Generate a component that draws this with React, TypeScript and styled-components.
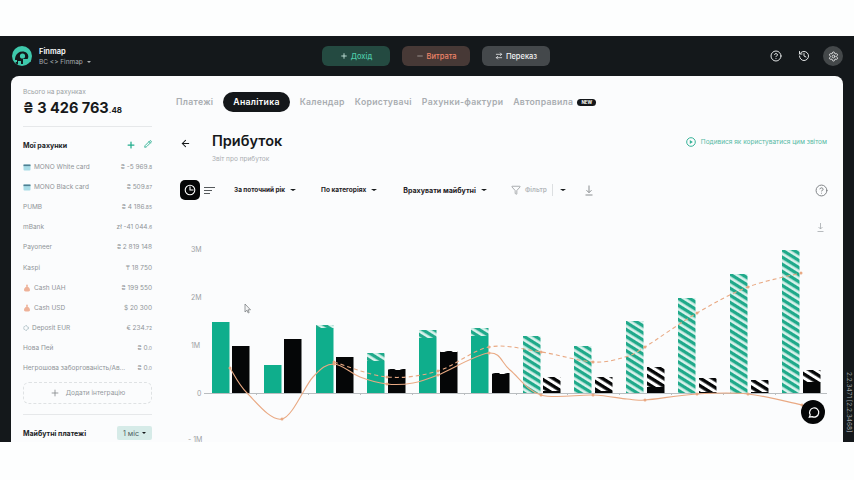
import React from "react";
import styled, { createGlobalStyle } from "styled-components";
import { ArrowLeft, ArrowRightLeft, CircleHelp, Filter, History, Minus, Pencil, Plus, Settings } from "lucide-react";

const GlobalStyle = createGlobalStyle`
  html, body { margin: 0; padding: 0; background: #fdfefe; }
  body { font-family: Inter, "Noto Sans", sans-serif; }
  * { box-sizing: border-box; }
`;

const Page = styled.div`
  width: 854px;
  height: 480px;
  display: flex;
  flex-direction: column;
  overflow: hidden;
  padding: 36px 0 38px;
`;

const Shell = styled.div`
  flex: 1;
  min-height: 0;
  display: flex;
  flex-direction: column;
  background: #14181b;
`;

const Header = styled.header`
  height: 40px;
  flex: none;
  display: grid;
  grid-template-columns: 322px 228px 1fr;
  align-items: center;
`;

const Brand = styled.div`
  display: flex;
  align-items: center;
  gap: 3px;
  padding-left: 11px;
`;

const BrandText = styled.div`
  display: flex;
  flex-direction: column;
  gap: 2px;
  color: #fff;
  padding: 1px 0 0 3px;
`;

const BrandName = styled.div`
  font-size: 7.5px;
  line-height: 9px;
  font-weight: 600;
`;

const BrandOrg = styled.div`
  font-size: 6.5px;
  line-height: 8px;
  color: #a8adb0;
  display: flex;
  align-items: center;
  gap: 4px;
`;

const MiniCaret = styled.span<{ $color?: string; $size?: number }>`
  display: inline-block;
  width: 0;
  height: 0;
  flex: none;
  border-left: ${(p) => p.$size ?? 3}px solid transparent;
  border-right: ${(p) => p.$size ?? 3}px solid transparent;
  border-top: ${(p) => (p.$size ?? 3) - 0.5}px solid ${(p) => p.$color ?? "#15181a"};
`;

const Actions = styled.div`
  display: flex;
  gap: 12px;
`;

const ActionButton = styled.button<{ $bg: string; $fg: string }>`
  width: 68px;
  height: 20px;
  border: 0;
  padding: 0;
  border-radius: 6px;
  background: ${(p) => p.$bg};
  color: ${(p) => p.$fg};
  font: 500 7.5px Inter, sans-serif;
  display: flex;
  align-items: center;
  justify-content: center;
  gap: 3px;
`;

const HeaderTools = styled.div`
  display: flex;
  align-items: center;
  justify-content: flex-end;
  gap: 16px;
  padding-right: 11px;
  color: #e2e4e5;
`;

const ToolCircle = styled.span<{ $active?: boolean }>`
  width: 20px;
  height: 20px;
  border-radius: 50%;
  display: flex;
  align-items: center;
  justify-content: center;
  background: ${(p) => (p.$active ? "#44484a" : "transparent")};
  margin-left: ${(p) => (p.$active ? "-3px" : "0")};
`;

const Body = styled.div`
  flex: 1;
  min-height: 0;
  display: flex;
  padding-left: 11px;
`;

const Gutter = styled.div`
  width: 11px;
  flex: none;
  display: flex;
  align-items: flex-end;
  justify-content: center;
  padding-bottom: 10px;
`;

const Version = styled.span`
  writing-mode: vertical-rl;
  font-size: 6.5px;
  line-height: 8px;
  color: #9da1a4;
  white-space: nowrap;
`;

const Panel = styled.div`
  flex: 1;
  min-width: 0;
  display: flex;
  background: #fbfcfd;
  border-radius: 8px 8px 0 0;
  overflow: hidden;
`;

const Sidebar = styled.aside`
  width: 154px;
  flex: none;
  padding: 12px 13px 0 12px;
  overflow: hidden;
`;

const TotalLabel = styled.div`
  font-size: 6.5px;
  line-height: 8px;
  color: #9a9fa3;
`;

const TotalValue = styled.div`
  margin-top: 3px;
  font-size: 14.5px;
  line-height: 18px;
  font-weight: 700;
  color: #17191b;
  white-space: nowrap;
`;

const Cents = styled.span<{ $size?: number }>`
  font-size: ${(p) => p.$size ?? 5}px;
  font-weight: inherit;
`;

const Divider = styled.div<{ $top: number }>`
  height: 1px;
  background: #e6e8ea;
  margin-top: ${(p) => p.$top}px;
`;

const SectionRow = styled.div<{ $top: number }>`
  display: flex;
  align-items: center;
  justify-content: space-between;
  height: 14px;
  margin-top: ${(p) => p.$top}px;
`;

const SectionTitle = styled.div`
  font-size: 7px;
  font-weight: 700;
  color: #202326;
  white-space: nowrap;
`;

const SectionIcons = styled.div`
  display: flex;
  gap: 8px;
  color: #23ad8e;
`;

const AccountList = styled.div`
  margin-top: 5px;
  display: flex;
  flex-direction: column;
`;

const AccountRow = styled.div`
  height: 20.1px;
  display: flex;
  align-items: center;
  justify-content: space-between;
  font-size: 6.5px;
  color: #8f9498;
  white-space: nowrap;
`;

const AccountName = styled.div`
  display: flex;
  align-items: center;
  gap: 3px;
  min-width: 0;
`;

const AddIntegration = styled.div`
  height: 22px;
  margin-top: 4px;
  border: 1px dashed #dfe2e4;
  border-radius: 6px;
  display: flex;
  align-items: center;
  justify-content: center;
  gap: 6px;
  font-size: 6.5px;
  color: #93989c;
`;

const Period = styled.div`
  width: 35px;
  height: 14px;
  background: #d6ebe8;
  border-radius: 2px;
  display: flex;
  align-items: center;
  justify-content: center;
  gap: 3px;
  font-size: 7px;
  color: #4a5a5a;
`;

const Main = styled.main`
  flex: 1;
  min-width: 0;
  position: relative;
  display: flex;
  flex-direction: column;
`;

const Tabs = styled.nav`
  display: flex;
  align-items: center;
  height: 20px;
  margin-top: 16px;
  padding-left: 11px;
  gap: 10px;
`;

const Tab = styled.span<{ $active?: boolean }>`
  font-size: 8.7px;
  line-height: 20px;
  font-weight: 600;
  letter-spacing: 0.29px;
  white-space: nowrap;
  color: ${(p) => (p.$active ? "#fff" : "#a9adb1")};
  background: ${(p) => (p.$active ? "#14171a" : "transparent")};
  border-radius: 10px;
  padding: ${(p) => (p.$active ? "0 10px" : "0")};
`;

const NewBadge = styled.span`
  margin-left: -6px;
  width: 19px;
  height: 7px;
  border-radius: 4px;
  background: #14171a;
  color: #fff;
  font-size: 4.5px;
  line-height: 7px;
  font-weight: 700;
  text-align: center;
`;

const TitleRow = styled.div`
  height: 32px;
  margin-top: 17px;
  display: flex;
  align-items: flex-start;
  padding: 4px 16px 0 15px;
  color: #15181a;
`;

const BackSlot = styled.div`
  width: 32px;
  flex: none;
`;

const TitleBlock = styled.div`
  flex: 1;
`;

const Title = styled.h1`
  margin: 0;
  font-size: 14.5px;
  line-height: 16px;
  font-weight: 600;
`;

const Subtitle = styled.div`
  margin-top: 6px;
  font-size: 6.5px;
  line-height: 8px;
  color: #a9adb1;
`;

const GuideLink = styled.div`
  display: flex;
  align-items: center;
  gap: 5px;
  font-size: 6.5px;
  line-height: 10px;
  color: #55b9a3;
  white-space: nowrap;
  padding-top: 4px;
`;

const Toolbar = styled.div`
  height: 20px;
  margin-top: 19px;
  display: flex;
  align-items: center;
  padding: 0 15px;
`;

const ChartToggle = styled.span`
  width: 20px;
  height: 20px;
  flex: none;
  border-radius: 5px;
  background: #050607;
  display: flex;
  align-items: center;
  justify-content: center;
`;

const ListToggle = styled.span`
  margin-left: 4px;
  width: 12px;
  display: flex;
  flex-direction: column;
  gap: 2px;
`;

const ListLine = styled.i<{ $w: number }>`
  display: block;
  height: 1px;
  width: ${(p) => p.$w}px;
  background: #55595c;
`;

const Dropdown = styled.span<{ $left: number; $size: number }>`
  margin-left: ${(p) => p.$left}px;
  display: flex;
  align-items: center;
  gap: 5px;
  font-size: ${(p) => p.$size}px;
  font-weight: 700;
  color: #1d2023;
  white-space: nowrap;
`;

const FilterText = styled.span`
  margin-left: 4px;
  font-size: 6.5px;
  font-weight: 600;
  color: #b4b8bb;
`;

const ToolDivider = styled.span`
  width: 1px;
  height: 12px;
  margin: 0 7px 0 5px;
  background: #dcdfe1;
`;

const ToolbarEnd = styled.span`
  margin-left: auto;
  display: flex;
  color: #7d8184;
`;

const ChartWrap = styled.div`
  flex: 1;
  min-height: 0;
  margin-top: 10px;
`;

const ChatBubble = styled.span`
  position: absolute;
  right: 18px;
  bottom: 18px;
  width: 24px;
  height: 24px;
  border-radius: 50%;
  background: #050607;
  display: flex;
  align-items: center;
  justify-content: center;
`;

const accounts = [
  { name: "MONO White card", icon: "card", value: "₴ -5 969", cents: ".8" },
  { name: "MONO Black card", icon: "card", value: "₴ 509", cents: ".87" },
  { name: "PUMB", value: "₴ 4 186", cents: ".85" },
  { name: "mBank", value: "zł -41 044", cents: ".6" },
  { name: "Payoneer", value: "₴ 2 819 148" },
  { name: "Kaspi", value: "₸ 18 750" },
  { name: "Cash UAH", icon: "cash", value: "₴ 199 550" },
  { name: "Cash USD", icon: "cash", value: "$  20 300" },
  { name: "Deposit EUR", icon: "deposit", value: "€ 234", cents: ".72" },
  { name: "Нова Пей", value: "₴ 0", cents: ".0" },
  { name: "Негрошова заборгованість/Ав...", value: "₴ 0", cents: ".0" },
];

const AccountIcon = ({ kind }: { kind?: string }) => {
  if (kind === "card")
    return (
      <svg width="8" height="8" viewBox="0 0 8 8">
        <rect x="0.5" y="1.5" width="7" height="6" rx="1" fill="#a8dbe6" />
        <rect x="0.5" y="1.5" width="7" height="1.6" fill="#4f7f92" />
      </svg>
    );
  if (kind === "cash")
    return (
      <svg width="8" height="8" viewBox="0 0 8 8">
        <path d="M3 .8h2L4.6 2.6C6 3.4 7 4.8 7 6c0 1.2-1 1.6-3 1.6S1 7.200 1 6c0-1.200 1-2.600 2.400-3.400z" fill="#eeb299" />
      </svg>
    );
  if (kind === "deposit")
    return (
      <svg width="6" height="8" viewBox="0 0 8 8" fill="none">
        <circle cx="4" cy="4" r="3" stroke="#7d9aa3" strokeWidth="1" strokeDasharray="2 1" />
      </svg>
    );
  return null;
};

// bars in page pixels: [left, top of solid part, top of hatched part]
const greens = [
  [212, 322, 322], [264, 365, 365], [316, 328, 325], [367, 361, 353], [419, 338, 330], [471, 336, 328],
  [523, 394, 336], [574, 394, 346], [626, 394, 321], [678, 394, 298], [730, 394, 274], [782, 394, 250],
];
const blacks = [
  [232, 346, 346], [284, 339, 339], [336, 357, 357], [388, 370, 369], [440, 352, 351], [492, 374, 373],
  [543, 391, 377], [595, 391, 377], [647, 387, 367], [699, 392, 378], [751, 392, 380], [803, 382, 370],
];
const solidLine: [number, number][] = [
  [230, 368], [247, 393], [282, 419], [313, 377], [334, 364], [360, 377], [387, 384], [413, 383], [438, 375],
  [489, 353], [510, 370], [541, 395], [593, 395], [627, 399], [645, 400], [697, 394], [748, 394], [802, 405],
];
const dashedLine: [number, number][] = [
  [334, 362], [387, 377], [438, 371], [489, 347], [541, 352], [593, 362], [625, 357], [645, 347], [697, 313],
  [748, 287], [801, 273],
];
const solidDots = [0, 2, 4, 6, 8, 9, 11, 12, 14, 15, 16, 17];
const dashedDots = [0, 1, 2, 3, 4, 5, 7, 8, 9, 10];
const ticks = [256, 308, 360, 412, 464, 516, 567, 619, 671, 723, 775];

const smooth = (pts: [number, number][]) => {
  let d = `M${pts[0][0]} ${pts[0][1]}`;
  for (let i = 0; i < pts.length - 1; i++) {
    const p0 = pts[Math.max(i - 1, 0)];
    const p1 = pts[i];
    const p2 = pts[i + 1];
    const p3 = pts[Math.min(i + 2, pts.length - 1)];
    d += ` C${p1[0] + (p2[0] - p0[0]) / 6} ${p1[1] + (p2[1] - p0[1]) / 6} ${p2[0] - (p3[0] - p1[0]) / 6} ${p2[1] - (p3[1] - p1[1]) / 6} ${p2[0]} ${p2[1]}`;
  }
  return d;
};

const Chart = () => (
  <svg width="678" height="232" viewBox="165 210 678 232" style={{ display: "block" }}>
    <defs>
      <pattern id="hatchGreen" width="6" height="6" patternUnits="userSpaceOnUse" patternTransform="rotate(32)">
        <rect width="6" height="6" fill="#d9f2ec" />
        <rect width="6" height="3.3" fill="#1fa98a" />
      </pattern>
      <pattern id="hatchBlack" width="6.500" height="6.500" patternUnits="userSpaceOnUse" patternTransform="rotate(32)">
        <rect width="6.500" height="6.500" fill="#fff" />
        <rect width="6.500" height="3.400" fill="#050607" />
      </pattern>
    </defs>
    <g fontFamily="Inter, sans-serif" fontSize="7" fill="#9da1a4">
      <text x="191" y="252">3M</text>
      <text x="191" y="300">2M</text>
      <text x="191" y="348">1M</text>
      <text x="197" y="396">0</text>
      <text x="188" y="441.500">- 1M</text>
    </g>
    <rect x="204" y="393" width="623" height="1" fill="#b9bdc0" />
    {ticks.map((x) => (
      <rect key={x} x={x} y="393" width="1" height="2" fill="#b9bdc0" />
    ))}
    {greens.map(([x, solid, top]) => (
      <g key={x}>
        {solid > top && <rect x={x} y={top} width="17.500" height={Math.min(solid, 393) - top} fill="url(#hatchGreen)" />}
        {solid < 393 && <rect x={x} y={solid} width="17.500" height={393 - solid} fill="#0fae8c" />}
      </g>
    ))}
    {blacks.map(([x, solid, top]) => (
      <g key={x}>
        {solid > top && <rect x={x} y={top} width="17.500" height={solid - top} fill="url(#hatchBlack)" />}
        <rect x={x} y={solid} width="17.500" height={393 - solid} fill="#050607" />
      </g>
    ))}
    <path d={smooth(solidLine)} fill="none" stroke="#e9a983" strokeWidth="1.100" />
    <path d={smooth(dashedLine)} fill="none" stroke="#e9a983" strokeWidth="1.100" strokeDasharray="4 3" />
    {solidDots.map((i) => (
      <circle key={i} cx={solidLine[i][0]} cy={solidLine[i][1]} r="1.5" fill="#e9a983" />
    ))}
    {dashedDots.map((i) => (
      <circle key={i} cx={dashedLine[i][0]} cy={dashedLine[i][1]} r="1.5" fill="#e9a983" />
    ))}
    <path d="M245 304v8l2-1.800 1.200 2.800 1-.5-1.200-2.700h2.500z" fill="#f4f5f6" stroke="#6f7376" strokeWidth=".7" />
    <path d="M820.500 223v6m-2-2 2 2 2-2M817.500 231.500h6" fill="none" stroke="#a6aaad" strokeWidth=".8" />
  </svg>
);

const Logo = () => (
  <svg width="22" height="22" viewBox="0 0 22 22">
    <circle cx="11" cy="11" r="10" fill="#3fc9ac" />
    <path d="M5.500 19c-1.500-2-2-5-1-7.500C5.500 8.500 8 6.500 11.500 6.500s5.800 2.200 5.800 5c0 1-.3 1.900-.8 2.500h-4.500v5h-2v-3h-3v3.500z" fill="#14181b" />
    <circle cx="11.500" cy="11" r="2.600" fill="#3fc9ac" />
    <rect x="13" y="14.800" width="7" height="2.200" rx="1.100" fill="#3fc9ac" />
    <rect x="3" y="15" width="3" height="2" fill="#3fc9ac" />
  </svg>
);

export default function App() {
  return (
    <Page>
      <GlobalStyle />
      <Shell>
        <Header>
          <Brand>
            <Logo />
            <BrandText>
              <BrandName>Finmap</BrandName>
              <BrandOrg>
                BC &lt;&gt; Finmap <MiniCaret $color="#a8adb0" $size={2.5} />
              </BrandOrg>
            </BrandText>
          </Brand>
          <Actions>
            <ActionButton $bg="#244a41" $fg="#4ecba9">
              <Plus size={8} color="#cfeee6" strokeWidth={2.5} /> Дохід
            </ActionButton>
            <ActionButton $bg="#473936" $fg="#ee8468">
              <Minus size={8} color="#a8a09c" strokeWidth={2.5} /> Витрата
            </ActionButton>
            <ActionButton $bg="#44484b" $fg="#f0f1f2">
              <ArrowRightLeft size={8} strokeWidth={2.2} /> Переказ
            </ActionButton>
          </Actions>
          <HeaderTools>
            <CircleHelp size={12} strokeWidth={2} />
            <History size={12} strokeWidth={2} />
            <ToolCircle $active>
              <Settings size={11} strokeWidth={2} />
            </ToolCircle>
          </HeaderTools>
        </Header>
        <Body>
          <Panel>
            <Sidebar>
              <TotalLabel>Всього на рахунках</TotalLabel>
              <TotalValue>
                ₴ 3 426 763<Cents $size={8}>.48</Cents>
              </TotalValue>
              <Divider $top={7} />
              <SectionRow $top={11}>
                <SectionTitle>Мої рахунки</SectionTitle>
                <SectionIcons>
                  <Plus size={10} strokeWidth={3} />
                  <Pencil size={8} strokeWidth={2.6} />
                </SectionIcons>
              </SectionRow>
              <AccountList>
                {accounts.map((a) => (
                  <AccountRow key={a.name}>
                    <AccountName>
                      <AccountIcon kind={a.icon} />
                      <span>{a.name}</span>
                    </AccountName>
                    <span>
                      {a.value}
                      {a.cents && <Cents>{a.cents}</Cents>}
                    </span>
                  </AccountRow>
                ))}
              </AccountList>
              <AddIntegration>
                <Plus size={10} color="#85898c" strokeWidth={2} /> Додати інтеграцію
              </AddIntegration>
              <Divider $top={10} />
              <SectionRow $top={11}>
                <SectionTitle>Майбутні платежі</SectionTitle>
                <Period>
                  1 міс <MiniCaret $size={2.5} />
                </Period>
              </SectionRow>
            </Sidebar>
            <Main>
              <Tabs>
                <Tab>Платежі</Tab>
                <Tab $active>Аналітика</Tab>
                <Tab>Календар</Tab>
                <Tab>Користувачі</Tab>
                <Tab>Рахунки-фактури</Tab>
                <Tab>Автоправила</Tab>
                <NewBadge>NEW</NewBadge>
              </Tabs>
              <TitleRow>
                <BackSlot>
                  <ArrowLeft size={11} strokeWidth={2.2} />
                </BackSlot>
                <TitleBlock>
                  <Title>Прибуток</Title>
                  <Subtitle>Звіт про прибуток</Subtitle>
                </TitleBlock>
                <GuideLink>
                  <svg width="10" height="10" viewBox="0 0 10 10" fill="none">
                    <circle cx="5" cy="5" r="4.300" stroke="#35b297" strokeWidth="1" />
                    <path d="M3.800 3v4l3-2z" fill="#35b297" />
                  </svg>
                  Подивися як користуватися цим звітом
                </GuideLink>
              </TitleRow>
              <Toolbar>
                <ChartToggle>
                  <svg width="12" height="12" viewBox="0 0 12 12" fill="none" stroke="#fff" strokeWidth="1.100">
                    <circle cx="6" cy="6" r="4.800" />
                    <path d="M6 2.500V6h3.500" />
                  </svg>
                </ChartToggle>
                <ListToggle>
                  <ListLine $w={11} />
                  <ListLine $w={8} />
                  <ListLine $w={6} />
                </ListToggle>
                <Dropdown $left={18} $size={6.4}>
                  За поточний рік <MiniCaret />
                </Dropdown>
                <Dropdown $left={25} $size={6.5}>
                  По категоріях <MiniCaret />
                </Dropdown>
                <Dropdown $left={26} $size={7.1}>
                  Врахувати майбутні <MiniCaret />
                </Dropdown>
                <Filter size={10} strokeWidth={1.8} color="#8f9396" style={{ marginLeft: 24 }} />
                <FilterText>Фільтр</FilterText>
                <ToolDivider />
                <MiniCaret />
                <svg width="10" height="11" viewBox="0 0 10 11" fill="none" stroke="#8a8e91" strokeWidth="1" style={{ marginLeft: 18 }}>
                  <path d="M5 .5v7M2.500 5.200 5 7.700l2.500-2.500M1.500 10h7" />
                </svg>
                <ToolbarEnd>
                  <CircleHelp size={13} strokeWidth={1.8} />
                </ToolbarEnd>
              </Toolbar>
              <ChartWrap>
                <Chart />
              </ChartWrap>
              <ChatBubble>
                <svg width="13" height="13" viewBox="0 0 13 13" fill="none" stroke="#fff" strokeWidth="1.200">
                  <path d="M2.300 11.200l.9-2.300A4.600 4.600 0 1 1 5 10.600z" />
                </svg>
              </ChatBubble>
            </Main>
          </Panel>
          <Gutter>
            <Version>2.2.3471 [2.2.3468]</Version>
          </Gutter>
        </Body>
      </Shell>
    </Page>
  );
}
